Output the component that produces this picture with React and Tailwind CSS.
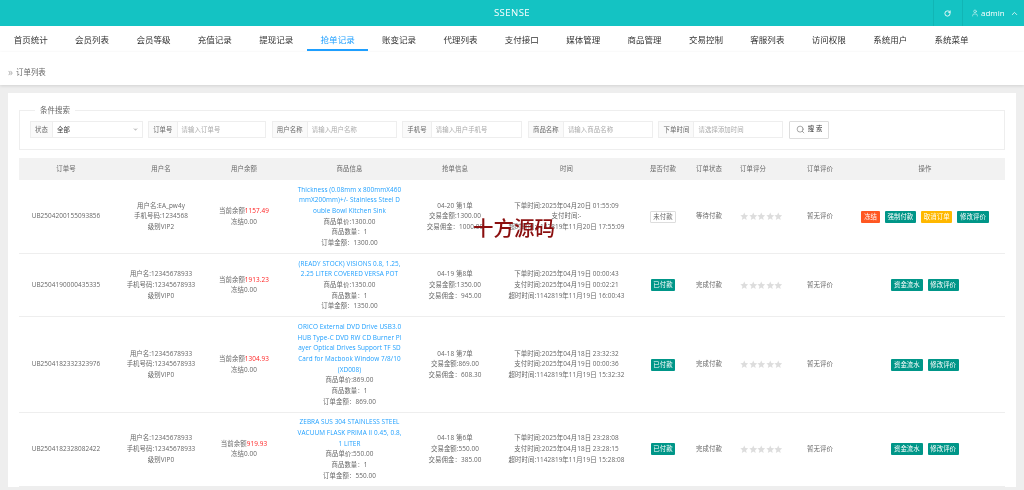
import React from "react";
import { RotateCw, User, ChevronUp, Search, ChevronDown } from "lucide-react";

const navItems = ["首页统计", "会员列表", "会员等级", "充值记录", "提现记录", "抢单记录", "账变记录", "代理列表", "支付接口", "媒体管理", "商品管理", "交易控制", "客服列表", "访问权限", "系统用户", "系统菜单"];

const orders = [
  {
    no: "UB2504200155093856", user: "EA_pw4y", phone: "1234568", level: "VIP2", balance: "1157.49",
    title: ["Thickness (0.08mm x 800mmX460", "mmX200mm)+/- Stainless Steel D", "ouble Bowl Kitchen Sink"],
    price: "1300.00", total: "1300.00", day: "04-20 第1单", amount: "1300.00", commission: "1000.00",
    times: ["下单时间:2025年04月20日 01:55:09", "支付时间:-", "超时时间:1142819年11月20日 17:55:09"],
    paid: false, status: "等待付款",
  },
  {
    no: "UB2504190000435335", user: "12345678933", phone: "12345678933", level: "VIP0", balance: "1913.23",
    title: ["(READY STOCK) VISIONS 0.8, 1.25,", "2.25 LITER COVERED VERSA POT"],
    price: "1350.00", total: "1350.00", day: "04-19 第8单", amount: "1350.00", commission: "945.00",
    times: ["下单时间:2025年04月19日 00:00:43", "支付时间:2025年04月19日 00:02:21", "超时时间:1142819年11月19日 16:00:43"],
    paid: true, status: "完成付款",
  },
  {
    no: "UB2504182332323976", user: "12345678933", phone: "12345678933", level: "VIP0", balance: "1304.93",
    title: ["ORICO External DVD Drive USB3.0", "HUB Type-C DVD RW CD Burner Pl", "ayer Optical Drives Support TF SD", "Card for Macbook Window 7/8/10", "(XD008)"],
    price: "869.00", total: "869.00", day: "04-18 第7单", amount: "869.00", commission: "608.30",
    times: ["下单时间:2025年04月18日 23:32:32", "支付时间:2025年04月19日 00:00:36", "超时时间:1142819年11月19日 15:32:32"],
    paid: true, status: "完成付款",
  },
  {
    no: "UB2504182328082422", user: "12345678933", phone: "12345678933", level: "VIP0", balance: "919.93",
    title: ["ZEBRA SUS 304 STAINLESS STEEL", "VACUUM FLASK PRIMA II 0.45, 0.8,", "1 LITER"],
    price: "550.00", total: "550.00", day: "04-18 第6单", amount: "550.00", commission: "385.00",
    times: ["下单时间:2025年04月18日 23:28:08", "支付时间:2025年04月18日 23:28:15", "超时时间:1142819年11月19日 15:28:08"],
    paid: true, status: "完成付款",
  },
];

const filters = [
  { label: "订单号", labelW: "w-[28.5px]", w: "w-[118px]", hint: "请输入订单号" },
  { label: "用户名称", labelW: "w-[35px]", w: "w-[125px]", hint: "请输入用户名称" },
  { label: "手机号", labelW: "w-[28.5px]", w: "w-[120px]", hint: "请输入用户手机号" },
  { label: "商品名称", labelW: "w-[35px]", w: "w-[125px]", hint: "请输入商品名称" },
  { label: "下单时间", labelW: "w-[35px]", w: "w-[125px]", hint: "请选择添加时间" },
];

const Star = () => (
  <svg viewBox="0 0 24 24" className="w-[8.5px] h-[8.5px] fill-[#ddd]">
    <path d="M12 1.5l3.2 7.2 7.8.8-5.9 5.2 1.7 7.8L12 18.5l-6.8 4 1.7-7.8L1 9.5l7.8-.8z" />
  </svg>
);

const Btn = ({ color, children }) => (
  <span className={`inline-block h-3 leading-3 px-[2.7px] text-white rounded-[1px] ${color}`}>{children}</span>
);

const Filter = ({ label, labelW, w, hint }) => (
  <div className={`flex h-[17px] border border-[#eee] ${w}`}>
    <div className={`${labelW} shrink-0 bg-[#fafafa] border-r border-[#eee] text-center leading-[15px] text-[#666]`}>{label}</div>
    <div className="pl-1 leading-[15px] text-[#aaa]">{hint}</div>
  </div>
);

export default function App() {
  return (
    <div className="h-screen overflow-hidden blur-[0.3px] bg-[#eee] text-[6.4px] leading-[10.67px] tracking-[0.08px] text-[#666] font-['Open_Sans','Noto_Sans_CJK_SC',sans-serif]">
      <header className="relative h-[26px] bg-[#14c3c3] flex justify-end text-white">
        <div className="absolute inset-0 text-center text-[9.6px] leading-[26px] tracking-[0.4px]">SSENSE</div>
        <div className="relative w-[29px] border-l border-[#11b5b5] flex items-center justify-center pr-[1px]">
          <RotateCw size={7} strokeWidth={3} />
        </div>
        <div className="relative w-[62px] border-l border-[#11b5b5] flex items-center pl-2 text-[8px] tracking-normal">
          <User size={8} strokeWidth={1.5} />
          <span className="ml-[2px]">admin</span>
          <ChevronUp size={9} className="ml-[5px]" />
        </div>
      </header>

      <nav className="h-[26px] bg-white flex text-[8.53px] tracking-normal text-[#333] leading-[28px]">
        {navItems.map((item) => (
          <div key={item} className={`w-[61.4px] h-[25px] text-center ${item === "抢单记录" ? "text-[#1e9fff] border-b-2 border-[#1e9fff]" : ""}`}>
            {item}
          </div>
        ))}
      </nav>

      <div className="h-[33px] bg-white shadow-[0_1px_3px_rgba(0,0,0,0.12)] flex items-center pl-2 text-[7.47px] tracking-normal pt-[7px]">
        <span className="text-[#aaa] text-[10px] mr-[3px]">»</span>
        <span>订单列表</span>
      </div>

      <main className="mx-2 mt-2 bg-white px-[11px] pt-3">
        <fieldset className="border border-[#eee] h-[45px] px-[10px]">
          <legend className="ml-[5px] px-[5px] text-[7.47px] tracking-normal">条件搜索</legend>
          <div className="flex gap-[5.6px] items-center mt-[5px]">
            <div className="flex h-[17px] w-[112.5px] border border-[#eee]">
              <div className="w-[22px] shrink-0 bg-[#fafafa] border-r border-[#eee] text-center leading-[15px]">状态</div>
              <div className="flex-1 pl-1 leading-[15px] text-[#333] relative">
                全部
                <ChevronDown size={7} className="absolute right-[3px] top-1 fill-[#c2c2c2] text-[#c2c2c2]" />
              </div>
            </div>
            {filters.map((f) => (
              <Filter key={f.label} {...f} />
            ))}
            <div className="flex items-center justify-center gap-[3px] w-10 h-[18px] border border-[#ddd] rounded-[1px] text-[#333]">
              <Search size={9} strokeWidth={1.5} className="text-[#666]" />
              <span>搜 索</span>
            </div>
          </div>
        </fieldset>

        <table className="mt-2 w-[986px] table-fixed border-collapse text-center">
          <colgroup>
            <col className="w-[94px]" />
            <col className="w-[96px]" />
            <col className="w-[70px]" />
            <col className="w-[141px]" />
            <col className="w-[70px]" />
            <col className="w-[153px]" />
            <col className="w-[40px]" />
            <col className="w-[52px]" />
            <col className="w-[60px]" />
            <col className="w-[50px]" />
            <col className="w-[160px]" />
          </colgroup>
          <thead>
            <tr className="bg-[#f2f2f2] h-[22px]">
              {["订单号", "用户名", "用户余额", "商品信息", "抢单信息", "时间", "是否付款", "订单状态"].map((h) => (
                <th key={h} className="font-normal">{h}</th>
              ))}
              <th className="font-normal text-left pl-[5px]">订单评分</th>
              <th className="font-normal">订单评价</th>
              <th className="font-normal">操作</th>
            </tr>
          </thead>
          <tbody>
            {orders.map((o) => (
              <tr key={o.no} className="border-b border-[#eee]">
                <td>{o.no}</td>
                <td>
                  <div>用户名:{o.user}</div>
                  <div>手机号码:{o.phone}</div>
                  <div>级别{o.level}</div>
                </td>
                <td>
                  <div>当前余额<span className="text-[#ff2222]">{o.balance}</span></div>
                  <div>冻结0.00</div>
                </td>
                <td className="py-[4.5px]">
                  {o.title.map((line) => (
                    <div key={line} className="whitespace-nowrap text-[#1e9fff]">{line}</div>
                  ))}
                  <div>商品单价:{o.price}</div>
                  <div>商品数量：1</div>
                  <div>订单金额：{o.total}</div>
                </td>
                <td>
                  <div>{o.day}</div>
                  <div>交易金额:{o.amount}</div>
                  <div>交易佣金：{o.commission}</div>
                </td>
                <td>
                  {o.times.map((t) => (
                    <div key={t}>{t}</div>
                  ))}
                </td>
                <td>
                  {o.paid ? (
                    <span className="inline-block h-3 leading-3 px-[2.7px] bg-[#009688] text-white rounded-[1px]">已付款</span>
                  ) : (
                    <span className="inline-block h-3 leading-[10px] px-[2.7px] bg-white border border-[#ddd] rounded-[1px]">未付款</span>
                  )}
                </td>
                <td>{o.status}</td>
                <td className="pl-[5px]">
                  <div className="flex">
                    {[1, 2, 3, 4, 5].map((n) => (
                      <Star key={n} />
                    ))}
                  </div>
                </td>
                <td>暂无评价</td>
                <td>
                  <div className="flex justify-center gap-[5px]">
                    {o.paid ? (
                      <>
                        <Btn color="bg-[#009688]">资金流水</Btn>
                        <Btn color="bg-[#009688]">修改评价</Btn>
                      </>
                    ) : (
                      <>
                        <Btn color="bg-[#ff5722]">冻结</Btn>
                        <Btn color="bg-[#009688]">强制付款</Btn>
                        <Btn color="bg-[#ffb800]">取消订单</Btn>
                        <Btn color="bg-[#009688]">修改评价</Btn>
                      </>
                    )}
                  </div>
                </td>
              </tr>
            ))}
          </tbody>
        </table>
      </main>

      {/* watermark over the table */}
      <div className="fixed left-[473px] top-[214px] text-[20.5px] leading-[28px] tracking-normal font-medium text-[#8b0f0f]">十方源码</div>
    </div>
  );
}
